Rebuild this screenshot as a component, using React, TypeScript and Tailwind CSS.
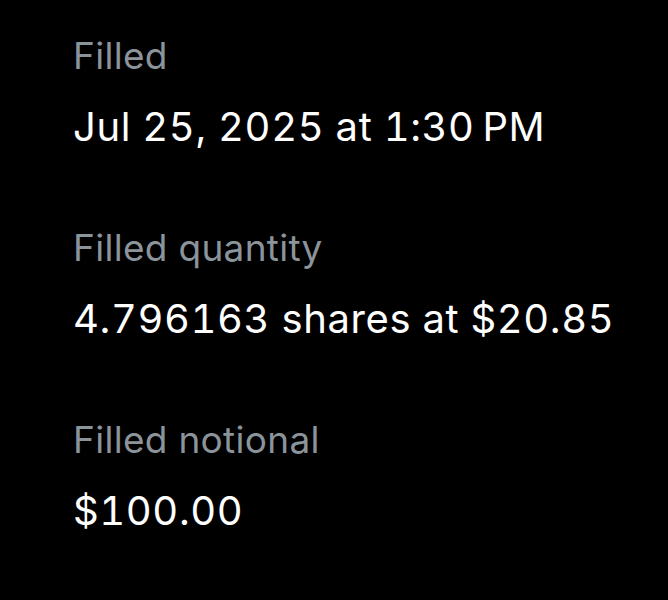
export default function App() {
  const rows = [
    { label: 'Filled', value: 'Jul 25, 2025 at 1:30\u2009PM' },
    { label: 'Filled quantity', value: '4.796163 shares at $20.85' },
    { label: 'Filled notional', value: '$100.00' },
  ];

  return (
    <div
      className="min-h-[600px] w-full bg-black px-[73px] pt-[34px] text-white"
      style={{ fontFamily: 'Inter, "Noto Sans", sans-serif' }}
    >
      <div className="flex flex-col gap-[75px]">
        {rows.map(row => (
          <div key={row.label} className="flex flex-col gap-[25px]">
            <div className="whitespace-nowrap text-[37px] leading-[44px] tracking-[0.3px] text-[#8b939b]">{row.label}</div>
            <div className="whitespace-nowrap text-[40px] leading-[48px] tracking-[0.6px] text-white tabular-nums">{row.value}</div>
          </div>
        ))}
      </div>
    </div>
  );
}
